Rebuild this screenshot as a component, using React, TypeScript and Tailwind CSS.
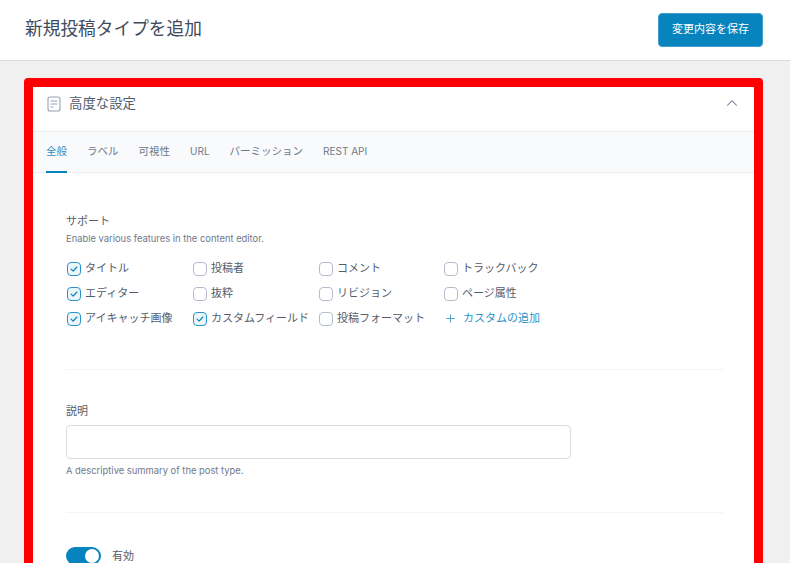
import React from 'react';
import { ChevronUp, Plus } from 'lucide-react';

const font = { fontFamily: 'Inter, "Noto Sans CJK JP", sans-serif' };

const tabs = ['全般', 'ラベル', '可視性', 'URL', 'パーミッション', 'REST API'];

const supports: { label: string; checked: boolean }[] = [
  { label: 'タイトル', checked: true },
  { label: '投稿者', checked: false },
  { label: 'コメント', checked: false },
  { label: 'トラックバック', checked: false },
  { label: 'エディター', checked: true },
  { label: '抜粋', checked: false },
  { label: 'リビジョン', checked: false },
  { label: 'ページ属性', checked: false },
  { label: 'アイキャッチ画像', checked: true },
  { label: 'カスタムフィールド', checked: true },
  { label: '投稿フォーマット', checked: false },
];

function Checkbox({ label, checked }: { label: string; checked: boolean }) {
  return (
    <div className="flex items-center gap-[4px] h-[25px] pl-px whitespace-nowrap">
      <span
        className={`w-[14px] h-[14px] shrink-0 rounded-[4px] border flex items-center justify-center ${
          checked ? 'border-[#2a93c9] bg-[#ebf5fa]' : 'border-[#b4bccb] bg-white'
        }`}
      >
        {checked && (
          <svg viewBox="0 0 12 12" className="w-[10px] h-[10px]" fill="none">
            <path d="M2.5 6.2 L5 8.6 L9.5 3.6" stroke="#0783be" strokeWidth="1.4" strokeLinecap="round" strokeLinejoin="round" />
          </svg>
        )}
      </span>
      <span className="text-[11px] leading-none text-[#535c6c]">{label}</span>
    </div>
  );
}

export default function App() {
  return (
    <div className="h-[563px] overflow-hidden bg-[#f0f0f0]" style={font}>
      {/* Top bar */}
      <div className="h-[61px] bg-white border-b border-[#dcdcdc] flex items-center justify-between pl-[25px] pr-[27px]">
        <h1 className="text-[17.7px] font-normal text-[#3f4a5c] -mt-[1px]">新規投稿タイプを追加</h1>
        <button className="w-[105px] h-[34px] -mt-[1px] rounded-[4px] bg-[#0783be] border border-[#3f9fcd] text-[11px] text-white">
          変更内容を保存
        </button>
      </div>

      {/* Panel */}
      <div className="mt-[17px] mr-[27px] ml-[24px] border-[9px] border-[#ff0000] rounded-[4px] bg-white h-[600px]">
        <div className="h-[45px] border-b border-[#eaecf0] flex items-start justify-between pt-[6px] pl-[14px] pr-[13px]">
          <div className="flex items-center gap-[8px] h-[20px]">
            <svg viewBox="0 0 14 16" className="w-[14px] h-[16px] mt-[1px]" fill="none" stroke="#98a2b3" strokeWidth="1.1" strokeLinecap="round">
              <rect x="1" y="1" width="12" height="14" rx="2" />
              <path d="M4 5 H10 M4 8 H10 M4 11 H6" />
            </svg>
            <span className="text-[13.4px] text-[#535c6c]">高度な設定</span>
          </div>
          <ChevronUp className="w-[18px] h-[18px] mt-px text-[#667085]" strokeWidth={1.4} />
        </div>

        <div className="h-[41px] bg-[#f9fafb] border-b border-[#eaecf0] flex pl-[13px] gap-[20px]">
          {tabs.map((tab, i) => (
            <div
              key={tab}
              className={`h-[41px] flex items-center whitespace-nowrap border-b-2 ${
                tab === 'URL' || tab === 'REST API' ? 'text-[10px]' : 'text-[10.5px]'
              } ${i === 0 ? 'border-[#0783be] text-[#2a93c9]' : 'border-transparent text-[#70788a]'}`}
            >
              {tab}
            </div>
          ))}
        </div>

        <div className="pl-[33px] pr-[31px] pt-[41px]">
          <div className="text-[11px] leading-[14px] text-[#535c6c]">サポート</div>
          <div className="mt-[4px] text-[9.4px] leading-[13px] text-[#70788a]">Enable various features in the content editor.</div>

          <div className="mt-[11px] grid grid-cols-[126px_126px_125px_125px] pb-[38px] border-b border-[#f2f4f7]">
            {supports.map(s => (
              <Checkbox key={s.label} label={s.label} checked={s.checked} />
            ))}
            <div className="flex items-center gap-[6px] h-[25px] pl-[1px] text-[#2a93c9]">
              <Plus className="w-[13px] h-[13px]" strokeWidth={1.5} />
              <span className="text-[11px] leading-none">カスタムの追加</span>
            </div>
          </div>

          <div className="pt-[34px] pb-[35px] border-b border-[#f2f4f7]">
            <div className="text-[11px] leading-[14px] text-[#535c6c]">説明</div>
            <div className="mt-[7px] w-[505px] h-[34px] rounded-[4px] border border-[#d9dce3] bg-white" />
            <div className="mt-[5px] text-[9.4px] leading-[13px] text-[#70788a]">A descriptive summary of the post type.</div>
          </div>

          <div className="pt-[34px] flex items-center gap-[11px]">
            <span className="w-[35px] h-[18px] rounded-full bg-[#0783be] flex items-center justify-end pr-[2px]">
              <span className="w-[14px] h-[14px] rounded-full bg-white" />
            </span>
            <span className="text-[11px] text-[#535c6c]">有効</span>
          </div>
        </div>
      </div>
    </div>
  );
}
